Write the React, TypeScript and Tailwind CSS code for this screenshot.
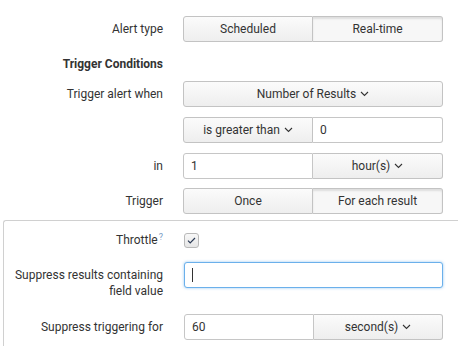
import React from "react";

const Chevron = () => (
  <svg width="9" height="6" viewBox="0 0 9 6" className="ml-[4px] inline-block" fill="none">
    <path d="M1 1l3.5 3.5L8 1" stroke="#333" strokeWidth="1.1" />
  </svg>
);

const btn =
  "flex items-center justify-center h-[26px] border border-[#c3c3c3] bg-gradient-to-b from-[#fbfbfb] to-[#eeeeee] text-[#333] text-[12px]";
const btnSel =
  "flex items-center justify-center h-[26px] border border-[#c3c3c3] bg-[#f7f7f7] shadow-[inset_0_2px_2px_rgba(0,0,0,0.1)] text-[#333] text-[12px]";
const inp =
  "flex items-center h-[26px] border border-[#c6c6c6] bg-white text-[#333] text-[12px] px-[7px]";

function Row({ label, children, bold }: { label: string; children?: React.ReactNode; bold?: boolean }) {
  return (
    <div className="flex items-center">
      <div className={`w-[163px] text-right text-[12px] leading-[18px] text-[#333] ${bold ? "font-bold" : ""}`}>{label}</div>
      <div className="ml-[20px] w-[260px]">{children}</div>
    </div>
  );
}

export default function App() {
  return (
    <div
      className="w-[458px] h-[346px] bg-white overflow-hidden pt-[16px]"
      style={{ fontFamily: "Roboto, 'Liberation Sans', sans-serif" }}
    >
      <Row label="Alert type">
        <div className="flex">
          <div className={`${btn} w-[130px] rounded-l-[3px]`}>Scheduled</div>
          <div className={`${btnSel} w-[130px] rounded-r-[3px] border-l-0`}>Real-time</div>
        </div>
      </Row>
      <div className="h-[13px]" />
      <Row label="Trigger Conditions" bold>
        <div className="h-[18px]" />
      </Row>
      <div className="h-[8px]" />
      <Row label="Trigger alert when">
        <div className={`${btn} w-[260px] rounded-[3px]`}>
          Number of Results
          <Chevron />
        </div>
      </Row>
      <div className="h-[10px]" />
      <Row label="">
        <div className="flex">
          <div className={`${btn} w-[130px] rounded-l-[3px]`}>
            is greater than
            <Chevron />
          </div>
          <div className={`${inp} w-[130px] rounded-r-[3px] border-l-0`}>0</div>
        </div>
      </Row>
      <div className="h-[10px]" />
      <Row label="in">
        <div className="flex">
          <div className={`${inp} w-[130px] rounded-l-[3px]`}>1</div>
          <div className={`${btn} w-[130px] rounded-r-[3px] border-l-0`}>
            hour(s)
            <Chevron />
          </div>
        </div>
      </Row>
      <div className="h-[9px]" />
      <Row label="Trigger">
        <div className="flex">
          <div className={`${btn} w-[130px] rounded-l-[3px]`}>Once</div>
          <div className={`${btnSel} w-[130px] rounded-r-[3px] border-l-0`}>For each result</div>
        </div>
      </Row>
      <div className="h-[6px]" />
      <div className="ml-[3px] border-l border-t border-[#d0d0d0] rounded-tl-[3px] pt-[10px] pb-[10px]">
        <div className="flex items-center h-[18px]">
          <div className="w-[159px] text-right text-[12px] leading-[18px] text-[#333]">
            Throttle
            <span className="relative -top-[4px] ml-[1px] text-[9px] leading-none text-[#7a9cc6]">?</span>
          </div>
          <div className="ml-[21px]">
            <div className="w-[15px] h-[15px] rounded-[3px] border border-[#b9b9b9] bg-gradient-to-b from-[#f8f8f8] to-[#e6e6e6] flex items-center justify-center">
              <svg width="9" height="7" viewBox="0 0 9 7" fill="none">
                <path d="M1 3.6l2.2 2.2L8 1" stroke="#2b3a55" strokeWidth="1.2" />
              </svg>
            </div>
          </div>
        </div>
        <div className="h-[13px]" />
        <div className="flex items-start">
          <div className="w-[159px] text-right text-[12px] leading-[16px] text-[#333] pt-[5px]">
            Suppress results containing
            <br />
            field value
          </div>
          <div className="ml-[21px]">
            <div className="flex items-center h-[26px] w-[259px] rounded-[3px] border border-[#6bb0eb] shadow-[0_0_3px_rgba(80,160,230,0.6)] bg-white px-[7px]">
              <div className="w-[1px] h-[14px] bg-[#333]" />
            </div>
          </div>
        </div>
        <div className="h-[15px]" />
        <div className="flex items-center h-[26px]">
          <div className="w-[159px] text-right text-[12px] leading-[18px] text-[#333]">Suppress triggering for</div>
          <div className="ml-[21px] flex">
            <div className={`${inp} w-[130px] rounded-l-[3px]`}>60</div>
            <div className={`${btn} w-[129px] rounded-r-[3px] border-l-0`}>
              second(s)
              <Chevron />
            </div>
          </div>
        </div>
      </div>
    </div>
  );
}
